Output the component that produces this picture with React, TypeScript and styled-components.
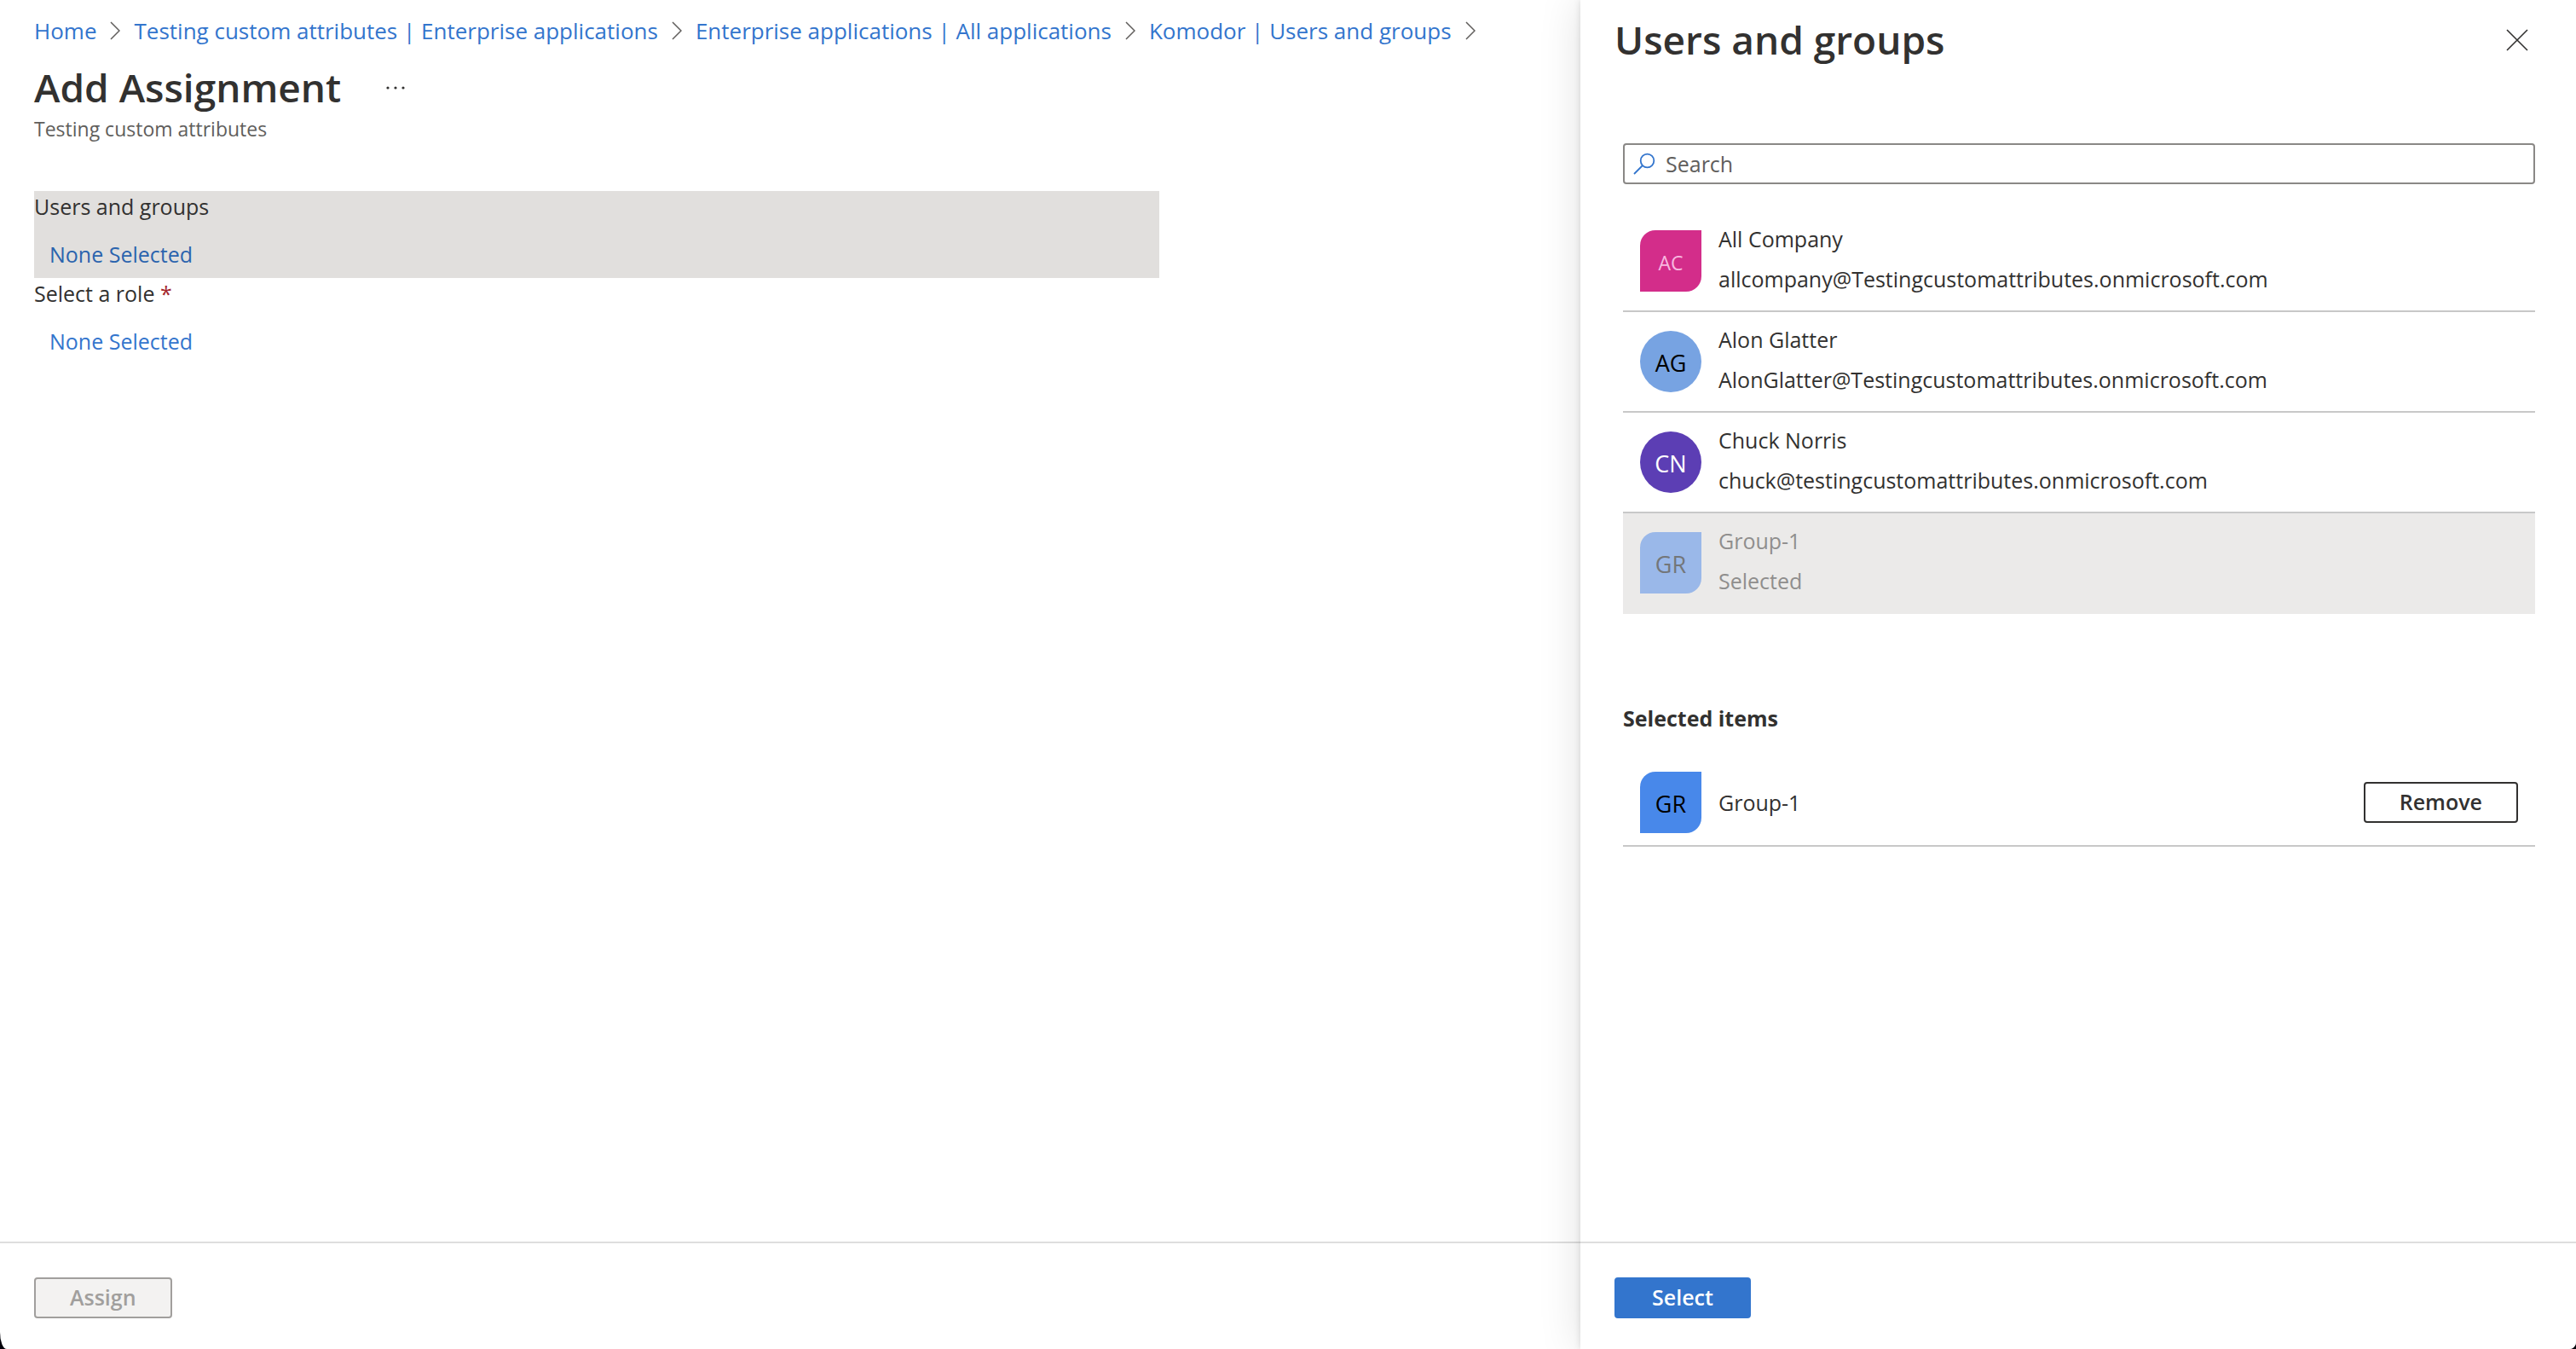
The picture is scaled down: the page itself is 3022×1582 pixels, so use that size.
import React, { useState } from "react";
import styled, { createGlobalStyle, css } from "styled-components";

const GlobalStyle = createGlobalStyle`
  *, *::before, *::after { box-sizing: border-box; }
  body {
    margin: 0;
    background: #05040c;
    color: #323130;
    font-family: "Open Sans", "Noto Sans", sans-serif;
    font-size: 25px;
    line-height: 36px;
  }
  h1, h2, h3, p, ol, ul { margin: 0; padding: 0; }
  ol, ul { list-style: none; }
  button, input { font: inherit; color: inherit; }
`;

const Page = styled.div`
  display: flex;
  min-height: 100vh;
  overflow: hidden;
  background: #fff;
  border-radius: 0 0 8px 8px / 0 0 8px 20px;
`;

const Blade = styled.div`
  display: flex;
  flex-direction: column;
  flex: 1;
  min-width: 0;
`;

const ContextBlade = styled(Blade)`
  flex: 0 0 1168px;
  background: #fff;
  box-shadow: 0 0 48px rgba(0, 0, 0, 0.12), 0 0 8px rgba(0, 0, 0, 0.12);
`;

const Header = styled.header`
  padding: 18px 40px 0;
`;

const Crumbs = styled.ol`
  display: flex;
  align-items: center;
  gap: 16px;
  font-size: 26px;
`;

const Crumb = styled.li`
  display: flex;
  align-items: center;
  gap: 16px;
  white-space: nowrap;
`;

const Link = styled.a`
  color: #3375cd;
  text-decoration: none;
`;

const TitleRow = styled.div`
  display: flex;
  align-items: center;
  gap: 48px;
  margin-top: 16px;
`;

const Title = styled.h1`
  font-size: 46px;
  line-height: 64px;
  font-weight: 600;
`;

const IconButton = styled.button`
  display: flex;
  padding: 2px 0 0;
  border: 0;
  background: none;
  cursor: pointer;
`;

const Subtitle = styled.p`
  color: #605e5c;
  font-size: 23px;
  line-height: 34px;
`;

const Fields = styled.main`
  flex: 1;
  padding: 56px 40px 0;
`;

const Field = styled.section<{ $active?: boolean }>`
  max-width: 1320px;
  height: 102px;
  background: ${(p) => (p.$active ? "#e1dfdd" : "transparent")};
`;

const FieldLabel = styled.h3`
  font-size: 25px;
  line-height: 36px;
  font-weight: 400;
`;

const Required = styled.span`
  color: #a4262c;
`;

const FieldLink = styled(Link)<{ $active?: boolean }>`
  display: block;
  width: max-content;
  margin: 20px 0 0 18px;
  color: ${(p) => (p.$active ? "#2b64ae" : "#3375cd")};
`;

const Footer = styled.footer`
  display: flex;
  padding: 40px 40px 36px;
  border-top: 2px solid #dedede;
`;

const Button = styled.button<{ $kind: "primary" | "outline" }>`
  height: 48px;
  min-width: 160px;
  padding: 0 40px 2px;
  border-radius: 4px;
  font-weight: 600;
  line-height: 36px;
  cursor: pointer;
  ${(p) =>
    p.$kind === "primary"
      ? css`
          border: 2px solid #3375cd;
          background: #3375cd;
          color: #fff;
        `
      : css`
          border: 2px solid #323130;
          background: #fff;
        `}
  &:disabled {
    border-color: #a19f9d;
    background: #f3f2f1;
    color: #a19f9d;
    cursor: default;
  }
`;

const PanelHeader = styled.header`
  display: flex;
  align-items: center;
  justify-content: space-between;
  padding: 14px 56px 0 40px;
`;

const PanelTitle = styled(Title).attrs({ as: "h2" })``;

const PanelBody = styled.div`
  flex: 1;
  padding: 90px 48px 0 50px;
`;

const SearchBox = styled.label`
  display: flex;
  align-items: center;
  gap: 12px;
  height: 48px;
  padding: 0 10px;
  border: 2px solid #8a8886;
  border-radius: 4px;
`;

const SearchInput = styled.input`
  flex: 1;
  min-width: 0;
  padding: 0;
  border: 0;
  outline: 0;
  background: none;
  &::placeholder {
    color: #605e5c;
    opacity: 1;
  }
`;

const PersonList = styled.ul`
  margin-top: 32px;
`;

const Person = styled.li<{ $disabled?: boolean }>`
  display: flex;
  align-items: center;
  gap: 20px;
  height: 118px;
  padding: 0 20px;
  border-bottom: 2px solid ${(p) => (p.$disabled ? "#ebeae9" : "#c8c8c8")};
  background: ${(p) => (p.$disabled ? "#ebeae9" : "transparent")};
  color: ${(p) => (p.$disabled ? "#8f8e8d" : "#323130")};
`;

const Avatar = styled.span<{ $bg: string; $fg: string; $round?: boolean; $small?: boolean }>`
  display: flex;
  flex: none;
  align-items: center;
  justify-content: center;
  width: 72px;
  height: 72px;
  padding-top: 4px;
  border-radius: ${(p) => (p.$round ? "50%" : "18px 0")};
  background: ${(p) => p.$bg};
  color: ${(p) => p.$fg};
  font-size: ${(p) => (p.$small ? "23px" : "27px")};
`;

const PersonText = styled.div`
  display: flex;
  flex: 1;
  flex-direction: column;
  min-width: 0;
  line-height: 47px;
  padding-bottom: 4px;
`;

const SectionTitle = styled.h3`
  margin-top: 104px;
  font-size: 25px;
  line-height: 36px;
  font-weight: 700;
`;

const SelectedItem = styled.li`
  display: flex;
  align-items: center;
  gap: 20px;
  margin-top: 33px;
  padding: 12px 20px 14px;
  border-bottom: 2px solid #c8c8c8;
`;

const SelectedName = styled.span`
  flex: 1;
`;

const ChevronIcon = () => (
  <svg width="12" height="22" viewBox="0 0 12 22" fill="none" stroke="#605e5c" strokeWidth="1.5" aria-hidden="true">
    <path d="M1 1l10 10L1 21" />
  </svg>
);

const MoreIcon = () => (
  <svg width="28" height="8" viewBox="0 0 28 8" fill="#323130" aria-hidden="true">
    <circle cx="7" cy="4" r="1.6" />
    <circle cx="16" cy="4" r="1.6" />
    <circle cx="25" cy="4" r="1.6" />
  </svg>
);

const CloseIcon = () => (
  <svg width="26" height="26" viewBox="0 0 26 26" fill="none" stroke="#323130" strokeWidth="1.6" aria-hidden="true">
    <path d="M1 1l24 24M25 1L1 25" />
  </svg>
);

const SearchIcon = () => (
  <svg width="26" height="26" viewBox="0 0 26 26" fill="none" stroke="#3375cd" strokeWidth="1.8" aria-hidden="true">
    <circle cx="16.5" cy="9.5" r="7.8" />
    <path d="M11 15L1 25" />
  </svg>
);

const crumbs = [
  "Home",
  "Testing custom attributes | Enterprise applications",
  "Enterprise applications | All applications",
  "Komodor | Users and groups",
];

const people = [
  { initials: "AC", name: "All Company", detail: "allcompany@Testingcustomattributes.onmicrosoft.com", bg: "#d32d8a", fg: "#f8b8e0", small: true },
  { initials: "AG", name: "Alon Glatter", detail: "AlonGlatter@Testingcustomattributes.onmicrosoft.com", bg: "#77a3e2", fg: "#000", round: true },
  { initials: "CN", name: "Chuck Norris", detail: "chuck@testingcustomattributes.onmicrosoft.com", bg: "#5c3eb4", fg: "#fff", round: true },
  { initials: "GR", name: "Group-1", detail: "Selected", bg: "#9ab8e9", fg: "#737679", disabled: true },
];

export default function App() {
  const [query, setQuery] = useState("");
  return (
    <>
      <GlobalStyle />
      <Page>
        <Blade>
          <Header>
            <nav aria-label="Breadcrumb">
              <Crumbs>
                {crumbs.map((label) => (
                  <Crumb key={label}>
                    <Link href="#">{label}</Link>
                    <ChevronIcon />
                  </Crumb>
                ))}
              </Crumbs>
            </nav>
            <TitleRow>
              <Title>Add Assignment</Title>
              <IconButton type="button" aria-label="More">
                <MoreIcon />
              </IconButton>
            </TitleRow>
            <Subtitle>Testing custom attributes</Subtitle>
          </Header>
          <Fields>
            <Field $active>
              <FieldLabel>Users and groups</FieldLabel>
              <FieldLink href="#" $active>None Selected</FieldLink>
            </Field>
            <Field>
              <FieldLabel>
                Select a role <Required>*</Required>
              </FieldLabel>
              <FieldLink href="#">None Selected</FieldLink>
            </Field>
          </Fields>
          <Footer>
            <Button type="button" $kind="outline" disabled>Assign</Button>
          </Footer>
        </Blade>
        <ContextBlade as="aside">
          <PanelHeader>
            <PanelTitle>Users and groups</PanelTitle>
            <IconButton type="button" aria-label="Close">
              <CloseIcon />
            </IconButton>
          </PanelHeader>
          <PanelBody>
            <SearchBox>
              <SearchIcon />
              <SearchInput
                type="text"
                aria-label="Search"
                placeholder="Search"
                value={query}
                onChange={(e) => setQuery(e.target.value)}
              />
            </SearchBox>
            <PersonList>
              {people.map((p) => (
                <Person key={p.name} $disabled={p.disabled}>
                  <Avatar $bg={p.bg} $fg={p.fg} $round={p.round} $small={p.small}>{p.initials}</Avatar>
                  <PersonText>
                    <span>{p.name}</span>
                    <span>{p.detail}</span>
                  </PersonText>
                </Person>
              ))}
            </PersonList>
            <SectionTitle>Selected items</SectionTitle>
            <ul>
              <SelectedItem>
                <Avatar $bg="#4888ea" $fg="#000">GR</Avatar>
                <SelectedName>Group-1</SelectedName>
                <Button type="button" $kind="outline">Remove</Button>
              </SelectedItem>
            </ul>
          </PanelBody>
          <Footer>
            <Button type="button" $kind="primary">Select</Button>
          </Footer>
        </ContextBlade>
      </Page>
    </>
  );
}
